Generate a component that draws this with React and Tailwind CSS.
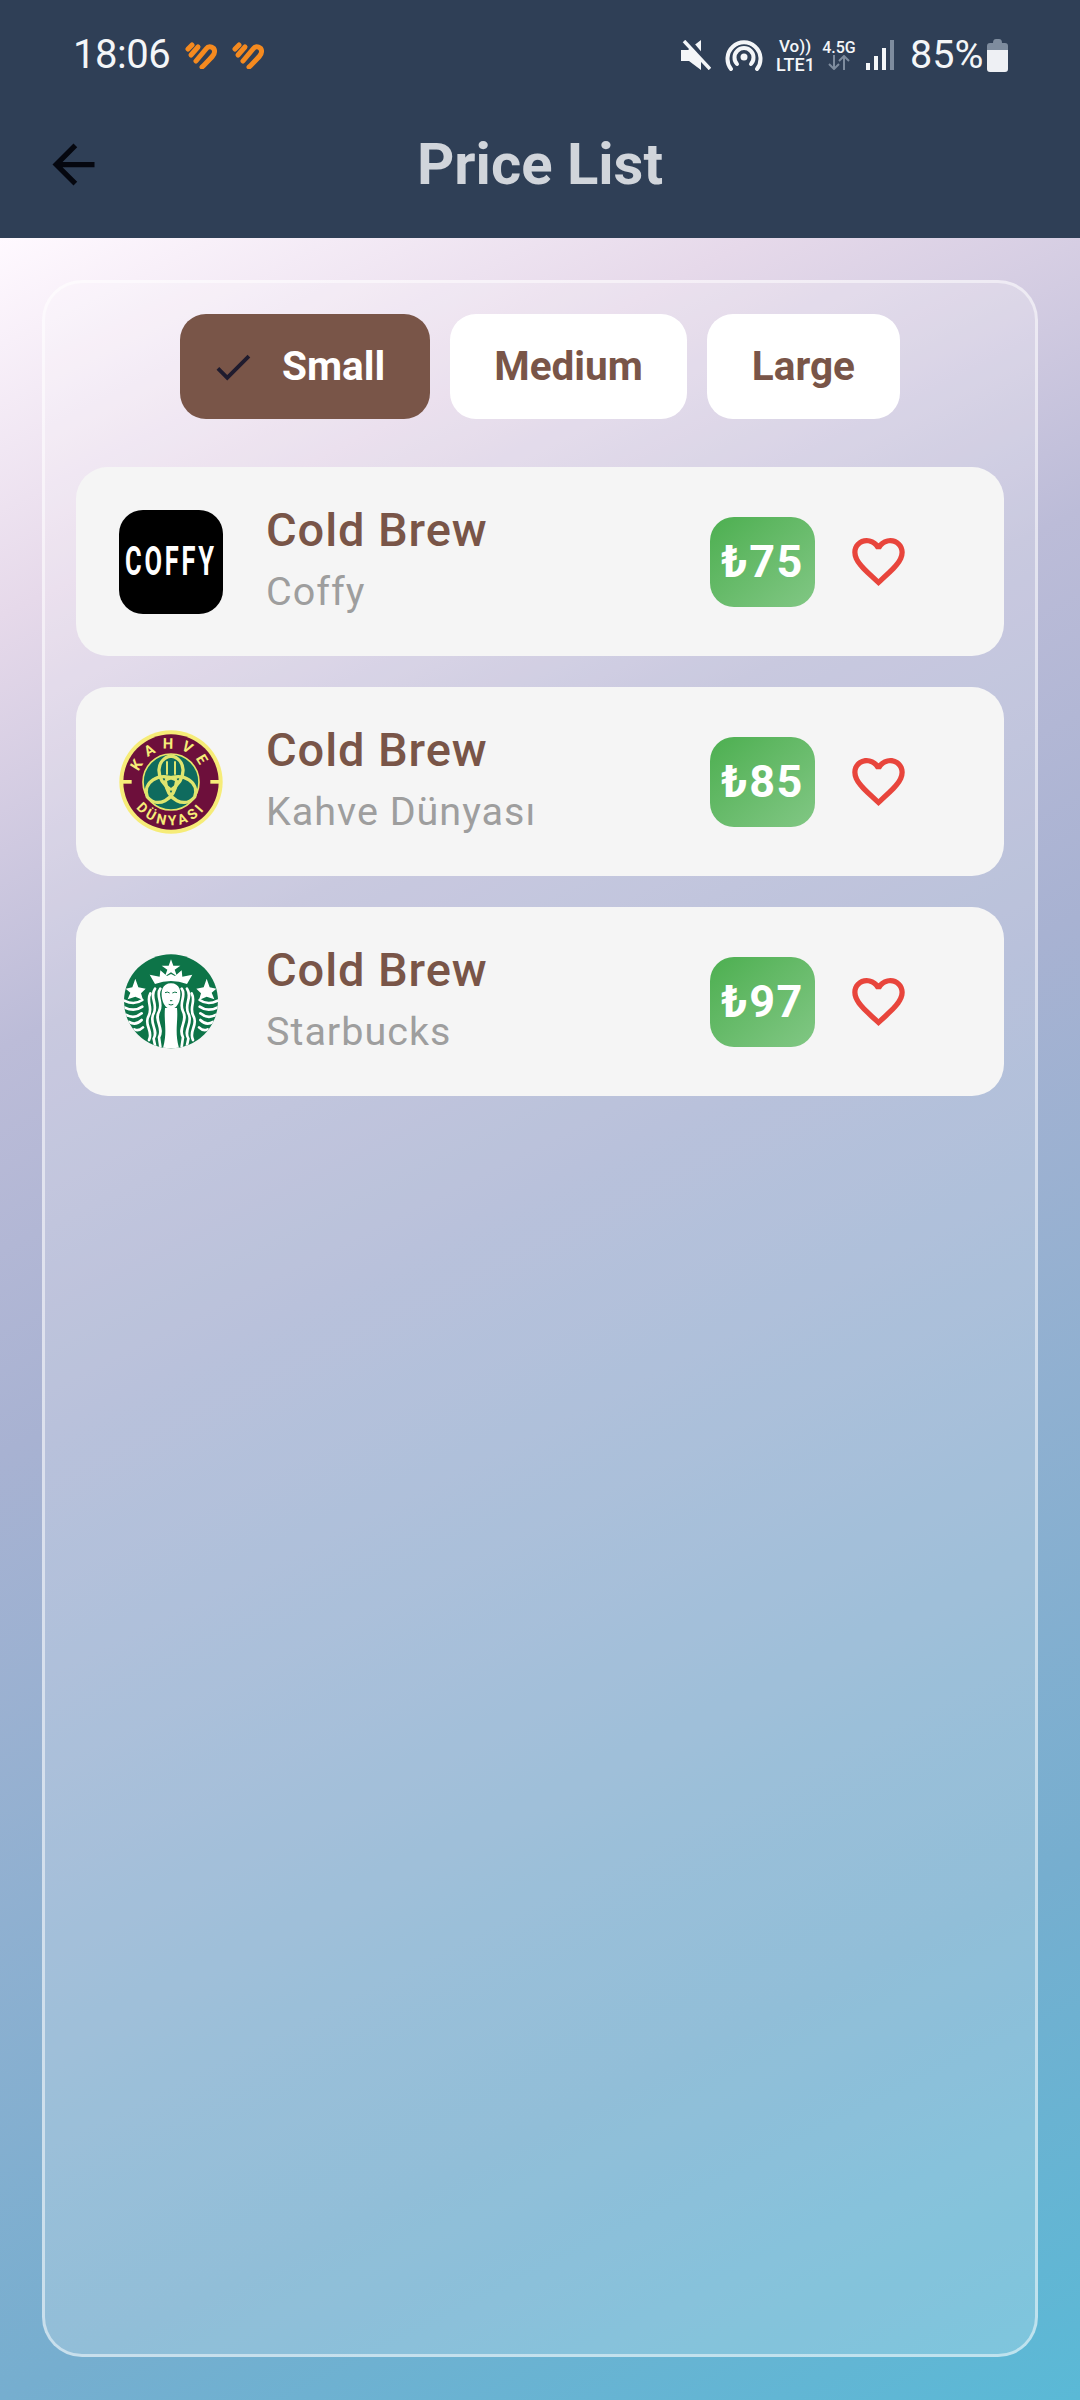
import React from 'react';

const items = [
  { name: 'Coffy', price: '75', logo: 'coffy' },
  { name: 'Kahve Dünyası', price: '85', logo: 'kahve' },
  { name: 'Starbucks', price: '97', logo: 'starbucks' },
];

const OrangeHeart = () => (
  <svg width="32" height="28" viewBox="0 0 32 28" fill="none" stroke="#f58a1f" strokeWidth="5" strokeLinecap="round">
    <path d="M3 8 L7 4" />
    <path d="M6 14 L13 6" />
    <path d="M11 20 L21 8 C24 4 30 6 29.5 11 C29.5 14 26 17 17 26" />
  </svg>
);

const StatusBar = () => (
  <div className="h-[74px] pt-[36px] pl-[73px] pr-[72px] flex items-center text-[#f4f6f8]">
    <span className="text-[40px] leading-none tracking-[-0.5px] w-[112px]">18:06</span>
    <div className="flex gap-[15px]">
      <OrangeHeart />
      <OrangeHeart />
    </div>
    <div className="ml-auto flex items-center">
      <svg width="30" height="30" viewBox="0 0 30 30" className="mr-[14px]">
        <path d="M0 10 h7 L20 0 v30 L8 21 H0z" fill="#f4f6f8" />
        <path d="M8 1 L30 27" stroke="#2f3f56" strokeWidth="5" />
        <path d="M3 1 L29 29" stroke="#f4f6f8" strokeWidth="3.5" />
      </svg>
      <svg width="38" height="34" viewBox="0 0 38 34" fill="none" stroke="#f4f6f8" strokeWidth="4" strokeLinecap="round" className="mr-[13px]">
        <path d="M6 31 A16.5 16.5 0 1 1 32 31" />
        <path d="M12 26 A9.5 9.5 0 1 1 26 26" />
        <circle cx="19" cy="19" r="3.5" fill="#f4f6f8" stroke="none" />
      </svg>
      <div className="flex flex-col w-[45px] leading-none font-medium">
        <span className="text-[17px] h-[18px] pl-[3px]">Vo{'))'}</span>
        <span className="text-[18px] h-[16px]">LTE1</span>
      </div>
      <div className="flex flex-col items-center w-[36px] leading-none font-medium">
        <span className="text-[16px] h-[15px]">4.5G</span>
        <svg width="24" height="15" viewBox="0 0 24 15" fill="none" stroke="#7e8c9e" strokeWidth="2">
          <path d="M7 0v14M2 9l5 5 5-5" />
          <path d="M17 15V1M12 6l5-5 5 5" />
        </svg>
      </div>
      <svg width="28" height="30" viewBox="0 0 28 30" className="ml-[9px] mr-[16px]">
        <rect x="0" y="23" width="4" height="7" fill="#f4f6f8" />
        <rect x="8" y="16" width="4" height="14" fill="#f4f6f8" />
        <rect x="16" y="8" width="4" height="22" fill="#f4f6f8" />
        <rect x="24" y="0" width="4" height="30" fill="#7e8c9e" />
      </svg>
      <span className="text-[39.5px] leading-none w-[77px]">85%</span>
      <svg width="21" height="33" viewBox="0 0 21 33">
        <path d="M6 4 Q6 0 9 0 h3 Q15 0 15 4 h3 Q21 4 21 7 v4 H0 V7 Q0 4 3 4z" fill="#7e8c9e" />
        <path d="M0 11 H21 V30 Q21 33 18 33 H3 Q0 33 0 30z" fill="#eef0f4" />
      </svg>
    </div>
  </div>
);

const CoffyLogo = () => (
  <div className="w-[104px] h-[104px] rounded-[24px] bg-black flex items-center justify-center overflow-hidden">
    <span className="text-white text-[41px] font-bold leading-none tracking-[4.5px] scale-x-[0.62]">COFFY</span>
  </div>
);

const KahveLogo = () => (
  <svg width="104" height="104" viewBox="56 56 312 312">
    <circle cx="212" cy="212" r="155" fill="#f6ec78" />
    <circle cx="212" cy="212" r="143" fill="#6d0f3b" />
    <rect x="60" y="206" width="34" height="11" fill="#f6ec78" />
    <rect x="330" y="206" width="34" height="11" fill="#f6ec78" />
    <defs>
      <path id="kahveTop" d="M112 212 A100 100 0 0 1 312 212" />
      <path id="kahveBottom" d="M82 212 A130 130 0 0 0 342 212" />
    </defs>
    <text fontFamily="Roboto, sans-serif" fontWeight="700" fontSize="44" fill="#f6ec78" letterSpacing="22">
      <textPath href="#kahveTop" startOffset="50%" textAnchor="middle">KAHVE</textPath>
    </text>
    <text fontFamily="Roboto, sans-serif" fontWeight="700" fontSize="42" fill="#f6ec78" letterSpacing="10">
      <textPath href="#kahveBottom" startOffset="50%" textAnchor="middle">DÜNYASI</textPath>
    </text>
    <circle cx="212" cy="212" r="84" fill="#0f6b5e" stroke="#e6e66a" strokeWidth="5" />
    <g fill="none" stroke="#dfe56e" strokeWidth="10">
      {[0, 120, 240].map((deg) => (
        <path key={deg} transform={`rotate(${deg} 212 216)`} d="M212 236 C160 200 168 142 212 134 C256 142 264 200 212 236" />
      ))}
      <path d="M200 150 V190 M224 150 V190" strokeWidth="6" />
    </g>
  </svg>
);

const hairLeft = (
  <g fill="none" stroke="#fff" strokeWidth="8" strokeLinecap="round">
    <path d="M180 172 C164 192 190 214 176 240 C160 268 192 290 176 318 L180 346" />
    <path d="M164 172 C146 198 174 218 160 246 C144 274 176 296 160 322 L164 342" />
    <path d="M150 186 C136 212 160 228 144 256 C130 280 160 300 146 326" />
    <path d="M72 208 C92 218 112 216 126 206" />
    <path d="M72 228 C92 238 112 236 126 226" />
    <path d="M76 250 C94 260 112 256 124 246" />
    <path d="M86 272 C100 280 114 276 124 266" />
    <path d="M102 294 C110 298 120 296 128 288" />
  </g>
);

const StarbucksLogo = () => (
  <svg width="104" height="104" viewBox="56 56 312 312">
    <defs>
      <clipPath id="sbCircle"><circle cx="212" cy="210" r="141" /></clipPath>
    </defs>
    <circle cx="212" cy="210" r="141" fill="#0d7448" />
    <g clipPath="url(#sbCircle)">
      <polygon fill="#fff" points="212,84 219,103 240,103 223,115 230,135 212,123 194,135 201,115 184,103 205,103" />
      <path fill="#fff" d="M148 130 L178 136 L180 117 L200 134 L212 128 L224 134 L244 117 L246 136 L276 130 L260 158 Q212 140 164 158z" />
      <polygon fill="#fff" points="105,142 114,168 136,172 122,186 128,206 105,196 82,204 90,184 76,172 96,168" />
      <polygon fill="#fff" points="319,142 328,168 348,172 334,184 342,204 319,196 296,206 302,186 288,172 310,168" />
      {hairLeft}
      <g transform="translate(424,0) scale(-1,1)">{hairLeft}</g>
      <path fill="#fff" d="M212 156 C238 156 244 180 238 205 C234 222 224 232 212 232 C200 232 190 222 186 205 C180 180 186 156 212 156z" />
      <path fill="#fff" d="M194 230 C190 270 202 300 188 350 H236 C222 300 234 270 230 230z" />
      <path d="M194 184 q8 -4 14 1 M216 185 q8 -5 14 -1 M209 208 h7 M205 219 q7 4 14 0" stroke="#0d7448" strokeWidth="3" fill="none" />
    </g>
  </svg>
);

const logos = { coffy: CoffyLogo, kahve: KahveLogo, starbucks: StarbucksLogo };

const PriceRow = ({ item }) => {
  const Logo = logos[item.logo];
  return (
    <div className="h-[189px] rounded-[32px] bg-[#f5f5f5] pl-[43px] pr-[94px] flex items-center">
      <div className="w-[104px] shrink-0"><Logo /></div>
      <div className="ml-[43px] flex-1 pb-[6px]">
        <div className="text-[47px] leading-[60px] font-medium tracking-[0.9px] text-[#795548]">Cold Brew</div>
        <div className="text-[39.5px] leading-[50px] mt-[7px] tracking-[1px] text-[#9e9e9e]">{item.name}</div>
      </div>
      <div className="w-[105px] h-[90px] rounded-[24px] bg-gradient-to-br from-[#4caf50] to-[#81c784] flex items-center justify-center text-white text-[45px] font-bold leading-none tracking-[1.5px]">
        ₺{item.price}
      </div>
      <svg width="63" height="63" viewBox="0 0 24 24" fill="#e8453c" className="ml-[32px]">
        <path d="M16.5 3c-1.74 0-3.41.81-4.5 2.09C10.91 3.81 9.24 3 7.5 3 4.42 3 2 5.42 2 8.5c0 3.78 3.4 6.86 8.55 11.54L12 21.35l1.45-1.32C18.6 15.36 22 12.28 22 8.5 22 5.42 19.58 3 16.5 3zm-4.4 15.55l-.1.1-.1-.1C7.14 14.24 4 11.39 4 8.5 4 6.5 5.5 5 7.5 5c1.54 0 3.04.99 3.57 2.36h1.87C13.46 5.99 14.96 5 16.5 5c2 0 3.5 1.5 3.5 3.5 0 2.89-3.14 5.74-7.9 10.05z" />
      </svg>
    </div>
  );
};

export default function App() {
  return (
    <div className="w-[1080px] h-[2400px] flex flex-col overflow-hidden font-['Roboto',sans-serif]">
      <div className="h-[238px] bg-[#2f3f56] shrink-0">
        <StatusBar />
        <div className="h-[164px] pl-[42px] pt-[16px] flex items-center">
          <svg width="63" height="63" viewBox="0 0 24 24" fill="#05070f">
            <path d="M20 11H7.83l5.59-5.59L12 4l-8 8 8 8 1.41-1.41L7.83 13H20v-2z" />
          </svg>
          <div className="flex-1 text-center pr-[105px] text-[58px] font-bold leading-none text-[#d1d5db]">Price List</div>
        </div>
      </div>
      <div className="flex-1 px-[42px] pt-[42px] bg-[linear-gradient(153.5deg,#fff9ff_0%,#e6d9ea_14%,#bcbcd8_30%,#a8b2d2_45%,#76aecf_80%,#5ab9d6_100%)]">
        <div className="h-[2077px] rounded-[40px] border-[3px] border-white/50 bg-white/20 px-[31px] pt-[31px]">
          <div className="flex justify-center gap-[20px]">
            <button className="h-[105px] rounded-[26px] bg-[#795548] pl-[30px] pr-[45px] flex items-center text-[40.5px] font-bold text-white">
              <svg width="46" height="46" viewBox="0 0 24 24" fill="#1f1b2e" className="mr-[26px]">
                <path d="M9 16.17L4.83 12l-1.42 1.41L9 19 21 7l-1.41-1.41z" />
              </svg>
              Small
            </button>
            <button className="h-[105px] rounded-[26px] bg-white px-[44px] text-[40.5px] font-bold text-[#795548]">Medium</button>
            <button className="h-[105px] rounded-[26px] bg-white px-[45px] text-[40.5px] font-bold text-[#795548]">Large</button>
          </div>
          <div className="mt-[48px] flex flex-col gap-[31px]">
            {items.map((item) => (
              <PriceRow key={item.name} item={item} />
            ))}
          </div>
        </div>
      </div>
    </div>
  );
}
